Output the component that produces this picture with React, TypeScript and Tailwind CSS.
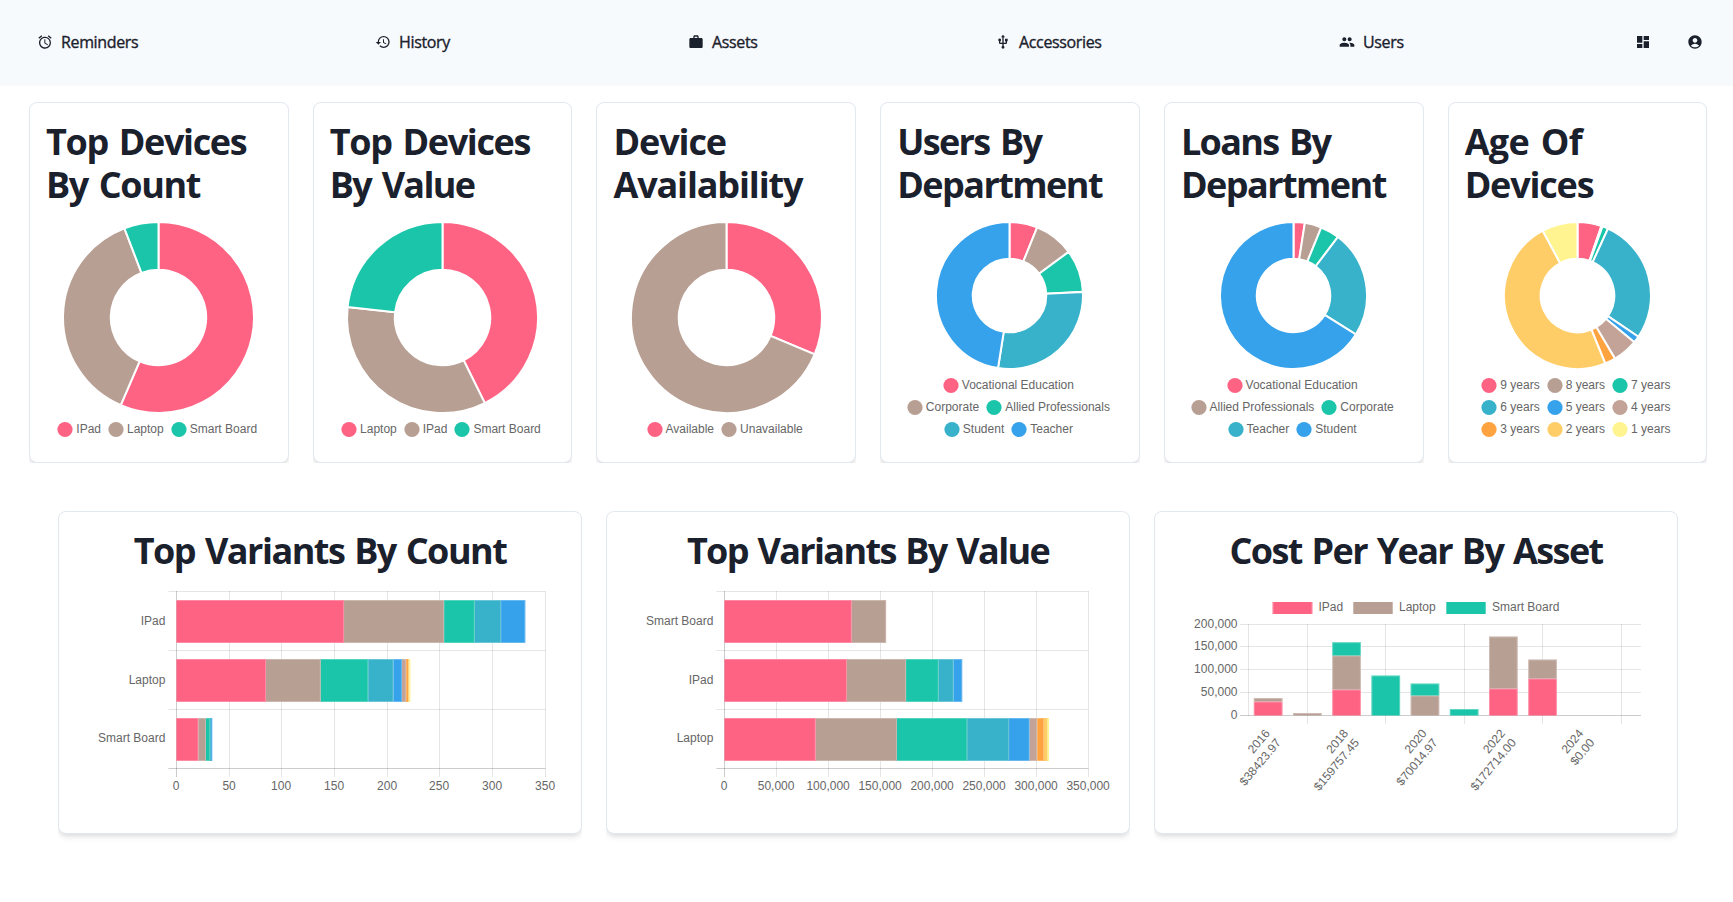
import { type ReactNode } from "react";
import {
  MdAccessAlarm,
  MdAccountCircle,
  MdDashboard,
  MdHistory,
  MdPeople,
  MdUsb,
  MdWork,
} from "react-icons/md";

const PINK = "#ff6384";
const BROWN = "#b89f93";
const GREEN = "#1bc5a9";
const TEAL = "#37b2ca";
const BLUE = "#36a2eb";
const MAUVE = "#c3a397";
const ORANGE = "#ffa341";
const AMBER = "#ffcd67";
const YELLOW = "#fff48f";
const PALETTE = [PINK, BROWN, GREEN, TEAL, BLUE, MAUVE, ORANGE, AMBER, YELLOW];

/* ---------- Doughnut charts ---------- */

type TitleLine = [text: string, tracking: string];

type DoughnutProps = {
  title: TitleLine[];
  /** End angle of every slice but the last, in degrees clockwise from the top. */
  stops: number[];
  legend: string[][];
};

function slicePath(r: number, from: number, to: number) {
  const point = (radius: number, deg: number) => {
    const a = (deg * Math.PI) / 180;
    return `${(radius * Math.sin(a)).toFixed(2)} ${(-radius * Math.cos(a)).toFixed(2)}`;
  };
  const large = to - from > 180 ? 1 : 0;
  const inner = r / 2;
  return `M${point(r, from)}A${r} ${r} 0 ${large} 1 ${point(r, to)}L${point(inner, to)}A${inner} ${inner} 0 ${large} 0 ${point(inner, from)}Z`;
}

function DoughnutCard({ title, stops, legend }: DoughnutProps) {
  const r = 95.5 - (legend.length - 1) * 11;
  const size = r * 2;
  const ends = [...stops, 360];
  const firstOfRow = legend.map((_, i) => legend.slice(0, i).flat().length);
  return (
    <div className="flex-1 overflow-hidden">
      <div className="h-[361px] rounded-lg border border-[#e2e8f0] bg-white pl-4 pt-[17px] shadow-[0_4px_6px_-1px_rgba(0,0,0,0.1),0_2px_4px_-1px_rgba(0,0,0,0.06)]">
        <Title lines={title} className="[word-spacing:3px]" />
        <div className="mt-4 flex w-[225.4px] flex-col items-center">
          <svg width={size} height={size} viewBox={`${-r} ${-r} ${size} ${size}`} className="block overflow-visible">
            {ends.map((end, i) => (
              <path
                key={i}
                d={slicePath(r, i ? ends[i - 1] : 0, end)}
                fill={PALETTE[i]}
                stroke="#fff"
                strokeWidth="2"
              />
            ))}
          </svg>
          <div className="mt-2 flex flex-col gap-[6px]">
            {legend.map((row, i) => (
              <div key={i} className="flex h-4 items-center justify-center gap-[10px]">
                {row.map((label, j) => (
                  <div key={label} className="flex items-center gap-[6px]">
                    <svg width="10" height="10" viewBox="0 0 10 10" className="overflow-visible">
                      <circle cx="5" cy="5.5" r="7.6" fill={PALETTE[firstOfRow[i] + j]} />
                    </svg>
                    <span className="whitespace-nowrap font-['Liberation_Sans',Arial,sans-serif] text-xs leading-4 text-[#666]">
                      {label}
                    </span>
                  </div>
                ))}
              </div>
            ))}
          </div>
        </div>
      </div>
    </div>
  );
}

function Title({ lines, className }: { lines: TitleLine[]; className: string }) {
  return (
    <h2
      className={`whitespace-nowrap font-['Open_Sans','Noto_Sans',sans-serif] text-[36px] font-bold leading-[43.2px] text-[#1a202c] ${className}`}
    >
      {lines.map(([text, tracking]) => (
        <span key={text} className={`block ${tracking}`}>
          {text}
        </span>
      ))}
    </h2>
  );
}

/* ---------- Stacked bar charts ---------- */

const chartText = "fill-[#666] font-['Liberation_Sans',Arial,sans-serif] text-[12px]";
const GRID = "rgba(0,0,0,0.1)";
const AXIS = "rgba(0,0,0,0.2)";

type HorizontalProps = {
  /** Horizontal position of the value axis inside the card. */
  x0: number;
  width: number;
  max: number;
  ticks: string[];
  rows: { label: string; parts: number[] }[];
};

function HorizontalBars({ x0, width, max, ticks, rows }: HorizontalProps) {
  const scale = width / max;
  return (
    <svg width="522" height="260" viewBox="0 0 522 260" className="block overflow-visible">
      {ticks.map((tick, i) => {
        const x = Math.floor(x0 + (i * width) / (ticks.length - 1)) + 0.5;
        return (
          <g key={tick}>
            <path d={`M${x} 21V207`} stroke={i ? GRID : AXIS} />
            <text x={x - 0.4} y="220" textAnchor="middle" className={chartText}>
              {tick}
            </text>
          </g>
        );
      })}
      {[0, 1, 2, 3].map((i) => (
        <path key={i} d={`M${x0 - 8} ${21.5 + i * 59}H${x0 + width}`} stroke={i === 3 ? AXIS : GRID} />
      ))}
      {rows.map(({ label, parts }, r) => {
        const top = 30 + r * 59;
        let sum = 0;
        return (
          <g key={label}>
            <text x={x0 - 11} y={top + 25 - (r === 2 ? 1 : 0)} textAnchor="end" className={chartText}>
              {label}
            </text>
            {parts.map((part, i) => {
              const x = x0 + sum * scale;
              const w = part * scale;
              sum += part;
              return (
                <g key={i}>
                  <rect x={x} y={top} width={w} height="43" fill={PALETTE[i]} />
                  <path
                    d={`M${x} ${top + 0.5}H${x + w - 0.5}V${top + 42.5}H${x}`}
                    fill="none"
                    stroke="#fff"
                    strokeOpacity={w > 4 ? 0.25 : 0}
                  />
                </g>
              );
            })}
          </g>
        );
      })}
    </svg>
  );
}

const YEARS: { parts: [number, string][]; label?: [string, string] }[] = [
  { parts: [[14, PINK], [3.5, BROWN]], label: ["2016", "$38423.97"] },
  { parts: [[2.5, BROWN]] },
  { parts: [[26, PINK], [34, BROWN], [13.3, GREEN]], label: ["2018", "$159757.45"] },
  { parts: [[40, GREEN]] },
  { parts: [[20, BROWN], [12, GREEN]], label: ["2020", "$70014.97"] },
  { parts: [[6.5, GREEN]] },
  { parts: [[27, PINK], [52, BROWN]], label: ["2022", "$172714.00"] },
  { parts: [[37, PINK], [19, BROWN]] },
  { parts: [], label: ["2024", "$0.00"] },
];

function YearBars() {
  const base = 145.5;
  return (
    <svg width="522" height="260" viewBox="0 0 522 260" className="block overflow-visible">
      {(
        [
          [117.5, "IPad", PINK],
          [198, "Laptop", BROWN],
          [291, "Smart Board", GREEN],
        ] as const
      ).map(([x, label, color]) => (
        <g key={label}>
          <rect x={x} y="32" width="40" height="12" fill={color} />
          <path d={`M${x + 0.5} 32V44M${x + 39.5} 32V44`} stroke="#fff" strokeOpacity="0.3" />
          <text x={x + 46} y="41" className={chartText}>
            {label}
          </text>
        </g>
      ))}
      {["200,000", "150,000", "100,000", "50,000", "0"].map((tick, i) => {
        const y = [54.5, 76.5, 99.5, 122.5, 145.5][i];
        return (
          <g key={tick}>
            <path d={`M85 ${y}H486`} stroke={i === 4 ? AXIS : GRID} />
            <text x="82.5" y={y + 3.5} textAnchor="end" className={chartText}>
              {tick}
            </text>
          </g>
        );
      })}
      <path d="M93.5 54V146" stroke={GRID} />
      {[152.5, 230.5, 309.5, 387.5, 466.5].map((x) => (
        <path key={x} d={`M${x} 54V154`} stroke={GRID} />
      ))}
      {YEARS.map(({ parts, label }, i) => {
        const x = 98.8 + i * 39.2;
        let y = base;
        return (
          <g key={i}>
            {parts.map(([h, color], j) => {
              y -= h;
              return (
                <g key={j}>
                  <rect x={x} y={y} width="28.7" height={h} fill={color} />
                  <path
                    d={`M${x + 0.5} ${y + h}V${y + 0.5}H${x + 28.2}V${y + h}`}
                    fill="none"
                    stroke="#fff"
                    strokeOpacity="0.3"
                  />
                </g>
              );
            })}
            {label && (
              <g transform={`translate(${x + 14} 161.5) rotate(-50)`} className={chartText}>
                <text x="0" y="3.5" textAnchor="end">
                  {label[0]}
                </text>
                <text x="0" y="17.9" textAnchor="end">
                  {label[1]}
                </text>
              </g>
            )}
          </g>
        );
      })}
    </svg>
  );
}

function BarCard({ title, children }: { title: TitleLine; children: ReactNode }) {
  return (
    <div className="flex-1 overflow-hidden pb-3">
      <div className="h-[323px] rounded-lg border border-[#e2e8f0] bg-white pt-[17px] shadow-[0_4px_6px_-1px_rgba(0,0,0,0.1),0_2px_4px_-1px_rgba(0,0,0,0.06)]">
        <Title lines={[title]} className="text-center [word-spacing:2px]" />
        <div className="-mt-[2px]">{children}</div>
      </div>
    </div>
  );
}

/* ---------- Page ---------- */

const NAV = [
  { icon: MdAccessAlarm, label: "Reminders" },
  { icon: MdHistory, label: "History" },
  { icon: MdWork, label: "Assets" },
  { icon: MdUsb, label: "Accessories" },
  { icon: MdPeople, label: "Users" },
];

export default function App() {
  return (
    <div className="min-h-[902px] w-[1733px] overflow-hidden bg-white text-[#1a202c]">
      <nav className="grid h-[86px] grid-cols-[338px_313px_307px_344px_296px_52px_auto] items-center bg-[#f7fafc] pb-[2px] pl-[37px]">
        {NAV.map(({ icon: Icon, label }) => (
          <a key={label} className="flex items-center gap-2">
            <Icon className="size-4" />
            <span className="font-['Open_Sans','Noto_Sans',sans-serif] text-base font-medium leading-6 tracking-[-0.35px] [-webkit-text-stroke:0.35px_#1a202c]">
              {label}
            </span>
          </a>
        ))}
        <MdDashboard className="size-4" />
        <MdAccountCircle className="size-4" />
      </nav>

      <section className="ml-[29px] mt-4 flex w-[1678.4px] gap-6">
        <DoughnutCard
          title={[
            ["Top Devices", "tracking-[-1.37px]"],
            ["By Count", "tracking-[-1.4px]"],
          ]}
          stops={[203.3, 339.1]}
          legend={[["IPad", "Laptop", "Smart Board"]]}
        />
        <DoughnutCard
          title={[
            ["Top Devices", "tracking-[-1.37px]"],
            ["By Value", "tracking-[-1.7px]"],
          ]}
          stops={[153.7, 276.3]}
          legend={[["Laptop", "IPad", "Smart Board"]]}
        />
        <DoughnutCard
          title={[
            ["Device", "tracking-[-1.1px]"],
            ["Availability", "tracking-[-1.15px]"],
          ]}
          stops={[112.7]}
          legend={[["Available", "Unavailable"]]}
        />
        <DoughnutCard
          title={[
            ["Users By", "tracking-[-1.7px]"],
            ["Department", "tracking-[-1.55px]"],
          ]}
          stops={[22.1, 53.6, 87.2, 189]}
          legend={[["Vocational Education"], ["Corporate", "Allied Professionals"], ["Student", "Teacher"]]}
        />
        <DoughnutCard
          title={[
            ["Loans By", "tracking-[-1.7px]"],
            ["Department", "tracking-[-1.55px]"],
          ]}
          stops={[8.9, 22.2, 37.2, 122]}
          legend={[["Vocational Education"], ["Allied Professionals", "Corporate"], ["Teacher", "Student"]]}
        />
        <DoughnutCard
          title={[
            ["Age Of", "tracking-[-0.67px]"],
            ["Devices", "tracking-[-1.2px]"],
          ]}
          stops={[19, 19.9, 24.5, 124.1, 129.4, 149.3, 157.8, 331.8]}
          legend={[
            ["9 years", "8 years", "7 years"],
            ["6 years", "5 years", "4 years"],
            ["3 years", "2 years", "1 years"],
          ]}
        />
      </section>

      <section className="ml-[58px] mt-12 flex w-[1620px] gap-6">
        <BarCard title={["Top Variants By Count", "tracking-[-1.5px]"]}>
          <HorizontalBars
            x0={117.4}
            width={369}
            max={350}
            ticks={["0", "50", "100", "150", "200", "250", "300", "350"]}
            rows={[
              { label: "IPad", parts: [159, 95, 29, 25, 23] },
              { label: "Laptop", parts: [85, 52, 45, 24, 8, 4, 2, 1, 1] },
              { label: "Smart Board", parts: [21, 7, 4, 1, 1] },
            ]}
          />
        </BarCard>
        <BarCard title={["Top Variants By Value", "tracking-[-1.66px]"]}>
          <HorizontalBars
            x0={117.4}
            width={364}
            max={350}
            ticks={["0", "50,000", "100,000", "150,000", "200,000", "250,000", "300,000", "350,000"]}
            rows={[
              { label: "Smart Board", parts: [122.5, 33] },
              { label: "IPad", parts: [117.8, 56.9, 31.4, 14.4, 8.2] },
              { label: "Laptop", parts: [87.9, 78, 67.6, 40.2, 19.9, 7.2, 6.5, 3.5, 1.3] },
            ]}
          />
        </BarCard>
        <BarCard title={["Cost Per Year By Asset", "tracking-[-1.6px]"]}>
          <YearBars />
        </BarCard>
      </section>
    </div>
  );
}
